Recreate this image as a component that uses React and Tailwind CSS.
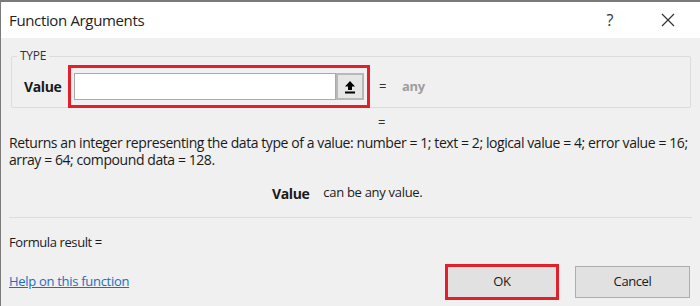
import { useState } from 'react';

const FONT = { fontFamily: '"Open Sans", "Noto Sans", Arial, sans-serif' };

function UploadIcon() {
  return (
    <svg width="12" height="14" viewBox="0 0 12 14" className="block">
      <path d="M6 1 L11 6.5 L8 6.5 L8 10 L4 10 L4 6.5 L1 6.5 Z" fill="#000" />
      <rect x="1" y="11.5" width="10" height="2" fill="#000" />
    </svg>
  );
}

export default function App() {
  const [value, setValue] = useState('');

  return (
    <div
      className="w-[700px] h-[306px] overflow-hidden bg-[#f0f0f0] border-t-2 border-l border-[#7a7a7a] text-[#1a1a1a] flex flex-col"
      style={FONT}
    >
      <div className="h-[36px] bg-white flex items-center shrink-0">
        <span className="ml-[8px] text-[15px] tracking-[-0.35px] text-[#222]">Function Arguments</span>
        <span className="ml-auto text-[16px] text-[#333] w-[20px] text-center">?</span>
        <span className="ml-[38px] mr-[22px] w-[20px] flex justify-center">
          <svg width="14" height="14" viewBox="0 0 14 14">
            <path d="M1 1 L13 13 M13 1 L1 13" stroke="#333" strokeWidth="1.2" />
          </svg>
        </span>
      </div>

      <div className="flex-1 pl-[8px] pr-[9px] pt-[18px] text-[13px] tracking-[-0.4px]">
        {/* TYPE group box */}
        <div className="relative border border-[#dcdcdc] rounded-[2px] h-[52px] ml-[2px] w-[680px] pl-[12px] pt-[8px] flex items-start">
          <span className="absolute -top-[8px] left-[5px] px-[3px] bg-[#f0f0f0] text-[12px] text-[#333] tracking-[-0.3px] leading-[14px]">TYPE</span>
          <span className="font-bold text-[14px] w-[44px] h-[43px] flex items-center">Value</span>
          <div className="border-[3px] border-[#e2202c] px-[3px] py-[5px] w-[302px] h-[43px] flex">
            <input
              value={value}
              onChange={(e) => setValue(e.target.value)}
              className="flex-1 h-[27px] bg-white border border-[#a9a9a9] outline-none px-1"
            />
            <button className="w-[28px] h-[27px] bg-[#e6e6e6] border-2 border-[#b8b8b8] flex items-center justify-center">
              <UploadIcon />
            </button>
          </div>
          <span className="h-[43px] flex items-center ml-[9px] text-[#333]">=</span>
          <span className="h-[43px] flex items-center ml-[16px] font-bold text-[#9e9e9e]">any</span>
        </div>

        <div className="mt-[4px] pl-[369px] h-[22px] flex items-center text-[#333]">=</div>

        <p className="w-[688px] leading-[17px] text-[14px] tracking-[-0.42px]">
          Returns an integer representing the data type of a value: number = 1; text = 2; logical value = 4; error value = 16; array = 64; compound data = 128.
        </p>

        <div className="mt-[15px] h-[20px] flex items-center pl-[263px]">
          <span className="font-bold text-[14px]">Value</span>
          <span className="ml-[14px] tracking-[-0.3px]">can be any value.</span>
        </div>

        <div className="mt-[14px] border-t border-[#dcdcdc] w-[683px]" />

        <div className="mt-[16px] h-[18px] flex items-center">Formula result =</div>

        <div className="mt-[12px] h-[36px] flex items-center">
          <a href="#" className="text-[#1a6ec0] underline tracking-[-0.3px]">Help on this function</a>
          <button className="ml-auto w-[114px] h-[36px] border-[3px] border-[#e2202c] bg-[#e1e1e1] text-[13px]">OK</button>
          <button className="ml-[16px] mr-[1px] w-[115px] h-[32px] border border-[#adadad] bg-[#e1e1e1] text-[13px]">Cancel</button>
        </div>
      </div>
    </div>
  );
}
